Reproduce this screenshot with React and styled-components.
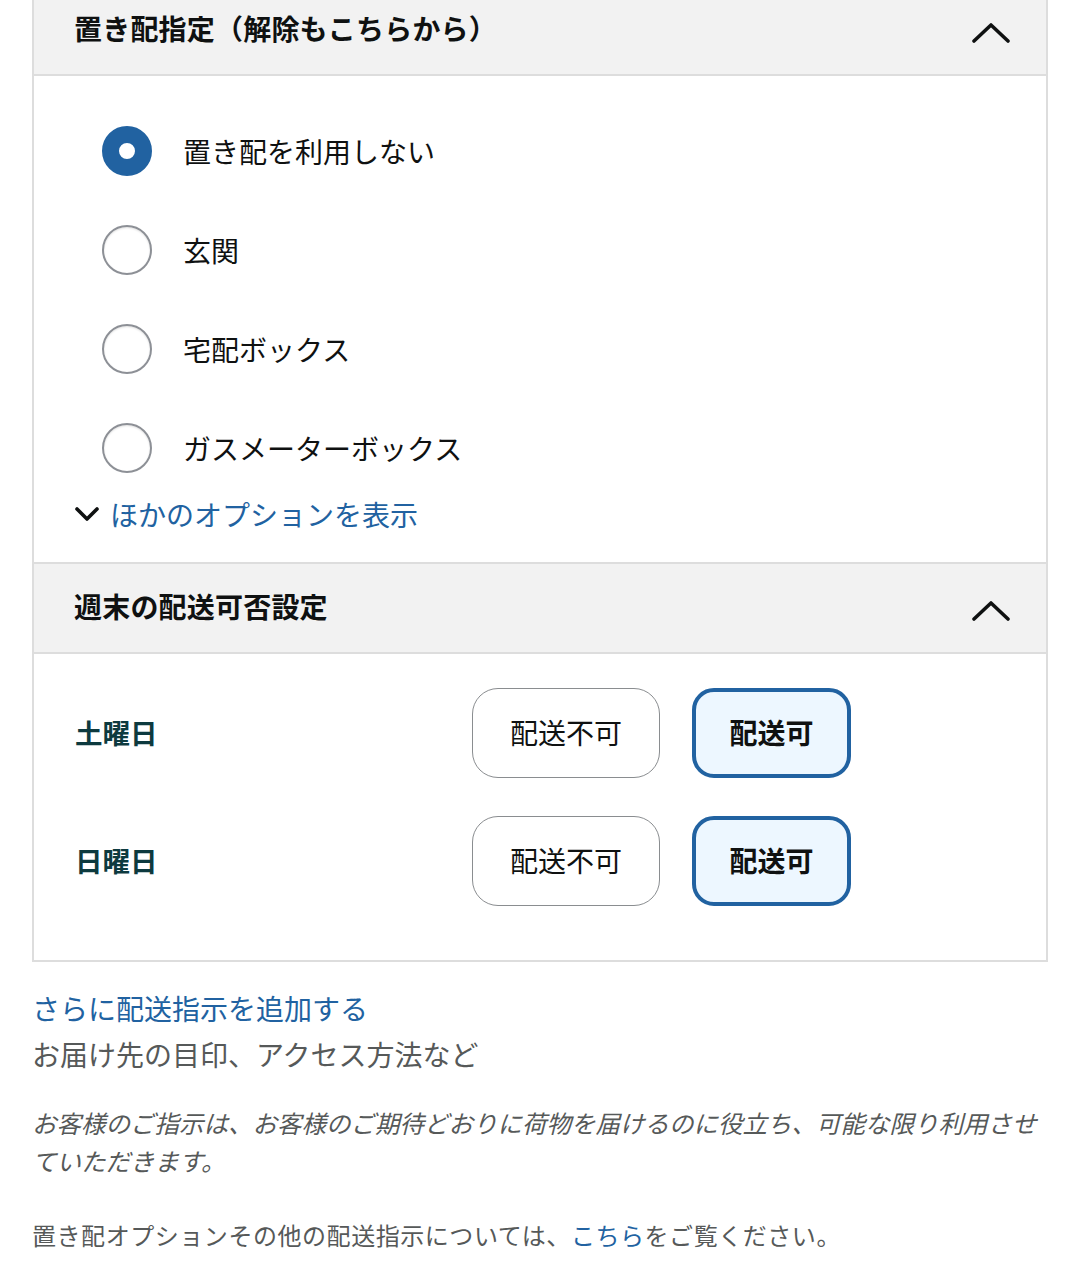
import React from 'react';
import styled, { createGlobalStyle } from 'styled-components';

const GlobalStyle = createGlobalStyle`
  body {
    margin: 0;
    background: #ffffff;
    font-family: "Noto Sans CJK JP", "Noto Sans", sans-serif;
    color: #0f1111;
  }
`;

const options = ['置き配を利用しない', '玄関', '宅配ボックス', 'ガスメーターボックス'];
const days = ['土曜日', '日曜日'];

const ChevronUp = () => (
    <svg width="38" height="22" viewBox="0 0 38 22">
        <path d="M2 19 L19 3 L36 19" fill="none" stroke="#0f1111" strokeWidth="3.6" strokeLinecap="round" strokeLinejoin="round" />
    </svg>
);

const ChevronDown = () => (
    <svg width="24" height="14" viewBox="0 0 24 14">
        <path d="M2 2 L12 12 L22 2" fill="none" stroke="#0f1111" strokeWidth="3.6" strokeLinecap="round" strokeLinejoin="round" />
    </svg>
);

const App = () => {
    return (
        <>
            <GlobalStyle />
            <Page>
                <Box>
                    <Header>
                        <Title>置き配指定（解除もこちらから）</Title>
                        <Caret><ChevronUp /></Caret>
                    </Header>
                    <OptionsBody>
                        <RadioList>
                            {options.map((label, i) => (
                                <RadioRow key={label}>
                                    <Radio $checked={i === 0} />
                                    <RadioLabel>{label}</RadioLabel>
                                </RadioRow>
                            ))}
                        </RadioList>
                        <MoreLink>
                            <ChevronDown />
                            <span>ほかのオプションを表示</span>
                        </MoreLink>
                    </OptionsBody>
                    <Header>
                        <Title>週末の配送可否設定</Title>
                        <Caret><ChevronUp /></Caret>
                    </Header>
                    <WeekendBody>
                        {days.map((day) => (
                            <DayRow key={day}>
                                <DayLabel>{day}</DayLabel>
                                <Choice>配送不可</Choice>
                                <Choice $active>配送可</Choice>
                            </DayRow>
                        ))}
                    </WeekendBody>
                </Box>

                <AddLink>さらに配送指示を追加する</AddLink>
                <SubText>お届け先の目印、アクセス方法など</SubText>
                <Note>
                    お客様のご指示は、お客様のご期待どおりに荷物を届けるのに役立ち、可能な限り利用させていただきます。
                </Note>
                <Footer>
                    置き配オプションその他の配送指示については、<Link>こちら</Link>をご覧ください。
                </Footer>
            </Page>
        </>
    );
};

export default App;

// Styled Components

const Page = styled.div`
  padding: 0 32px 30px;
  margin-top: -16px;
`;

const Box = styled.div`
  border: 2px solid #dddddd;
`;

const Header = styled.div`
  height: 88px;
  background-color: #f2f2f2;
  border-bottom: 2px solid #dddddd;
  display: flex;
  align-items: center;
  justify-content: space-between;
  padding: 0 36px 0 40px;
`;

const Title = styled.div`
  font-size: 28px;
  font-weight: 700;
  color: #0f1111;
  letter-spacing: 0.2px;
  margin-top: -5px;
`;

const Caret = styled.div`
  display: flex;
  margin-top: 6px;
`;

const OptionsBody = styled.div`
  padding: 25px 0 29px 41px;
  border-bottom: 2px solid #dddddd;
`;

const RadioList = styled.div`
  display: flex;
  flex-direction: column;
  padding-left: 27px;
`;

const RadioRow = styled.div`
  height: 99px;
  display: flex;
  align-items: center;
  gap: 31px;
`;

const Radio = styled.span`
  width: 50px;
  height: 50px;
  box-sizing: border-box;
  border-radius: 50%;
  flex-shrink: 0;
  border: ${p => (p.$checked ? '17px solid #2162a1' : '2px solid #8d9096')};
  background: #ffffff;
  box-shadow: ${p => (p.$checked ? 'none' : 'inset 0 1px 2px rgba(0,0,0,0.12)')};
`;

const RadioLabel = styled.span`
  font-size: 28px;
  color: #0f1111;
`;

const MoreLink = styled.div`
  display: flex;
  align-items: center;
  gap: 11px;
  height: 38px;
  margin-top: -2px;
  font-size: 28px;
  color: #2162a1;
`;

const WeekendBody = styled.div`
  padding: 34px 0 54px 41px;
  display: flex;
  flex-direction: column;
  gap: 38px;
`;

const DayRow = styled.div`
  display: flex;
  align-items: center;
`;

const DayLabel = styled.div`
  width: 397px;
  font-size: 27.5px;
  font-weight: 700;
  color: #0d3a3f;
  margin-top: -2px;
`;

const Choice = styled.div`
  box-sizing: border-box;
  height: 90px;
  width: ${p => (p.$active ? '159px' : '188px')};
  margin-right: 32px;
  display: flex;
  align-items: center;
  justify-content: center;
  border-radius: ${p => (p.$active ? '22px' : '26px')};
  border: ${p => (p.$active ? '4px solid #2162a1' : '1.5px solid #8a8d90')};
  background-color: ${p => (p.$active ? '#edf7ff' : '#ffffff')};
  font-size: 28px;
  font-weight: ${p => (p.$active ? 700 : 400)};
  color: #0f1111;
  padding-bottom: 2px;
`;

const AddLink = styled.div`
  margin-top: 26px;
  font-size: 28px;
  line-height: 40px;
  color: #2162a1;
`;

const SubText = styled.div`
  margin-top: 6px;
  font-size: 28px;
  line-height: 40px;
  color: #565959;
`;

const Note = styled.div`
  margin-top: 30px;
  font-size: 24.5px;
  line-height: 38px;
  font-style: italic;
  color: #565959;
`;

const Footer = styled.div`
  margin-top: 36px;
  font-size: 24px;
  line-height: 38px;
  letter-spacing: 0.55px;
  color: #565959;
`;

const Link = styled.span`
  color: #2162a1;
`;
